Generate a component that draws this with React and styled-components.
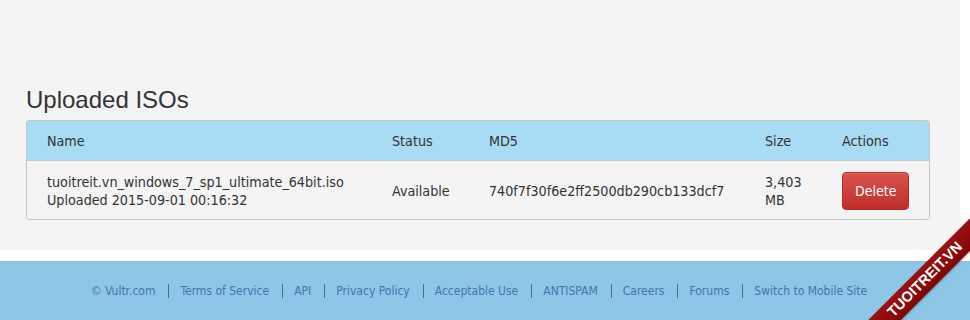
import React from 'react'
import styled, { createGlobalStyle } from 'styled-components'

const GlobalStyle = createGlobalStyle`
  html, body {
    margin: 0;
    padding: 0;
    background: #ffffff;
  }
  body {
    font-family: "DejaVu Sans Condensed", "DejaVu Sans", sans-serif;
    color: #333333;
  }
`

const Page = styled.div`
  position: relative;
  width: 970px;
  height: 320px;
  overflow: hidden;
  background: #ffffff;
`

const Main = styled.section`
  box-sizing: border-box;
  width: 960px;
  height: 250px;
  padding: 86px 0 0 26px;
  background: #f4f4f4;
`

const Heading = styled.h2`
  margin: 0 0 6px 0;
  font-family: "Liberation Sans", Arial, sans-serif;
  font-size: 24px;
  font-weight: 400;
  line-height: 28px;
  color: #333333;
`

const Table = styled.div`
  width: 904px;
  box-sizing: border-box;
  border: 1px solid #c3c7ca;
  border-radius: 3px;
  overflow: hidden;
  font-size: 14.2px;
`

const Row = styled.div`
  display: grid;
  grid-template-columns: 345px 97px 276px 77px 1fr;
  align-items: center;
  min-height: ${(p) => (p.head ? '40px' : '58px')};
  padding-top: ${(p) => (p.head ? '0' : '1px')};
  box-sizing: border-box;
  background: ${(p) => (p.head ? '#a7dcf4' : '#f4f4f4')};
  border-bottom: ${(p) => (p.head ? '1px solid #c4c9cc' : 'none')};
`

const Cell = styled.div`
  padding: 0 10px 0 20px;
  line-height: 18px;
  color: #333333;
`

const SizeCell = styled(Cell)`
  padding-right: 0;
  width: 40px;
`

const DeleteButton = styled.button`
  height: 38px;
  padding: 0 12px;
  font-family: "DejaVu Sans Condensed", "DejaVu Sans", sans-serif;
  font-size: 14px;
  color: #ffffff;
  background: linear-gradient(to bottom, #d9534f 0%, #c12e2a 100%);
  border: 1px solid #b92c28;
  border-radius: 4px;
  box-shadow: inset 0 1px 0 rgba(255, 255, 255, 0.15);
  cursor: pointer;
`

const Footer = styled.footer`
  margin-top: 11px;
  height: 59px;
  box-sizing: border-box;
  padding-right: 10px;
  background: #8dc6e6;
  display: flex;
  align-items: center;
  justify-content: center;
`

const FooterLink = styled.a`
  font-size: 12px;
  line-height: 14px;
  color: #4576a8;
  text-decoration: none;
  padding: 0 13px 0 11px;
  border-left: ${(p) => (p.first ? 'none' : '1px solid #3c6fa3')};
`

const Ribbon = styled.div`
  position: absolute;
  left: 835px;
  top: 268px;
  width: 180px;
  height: 23px;
  transform: rotate(-45deg);
  background: linear-gradient(to bottom, #9a1010, #7e0707);
  color: #ffffff;
  font-family: "Liberation Sans", Arial, sans-serif;
  font-weight: 700;
  font-size: 14.5px;
  line-height: 23px;
  text-align: center;
  box-shadow: 0 1px 2px rgba(0, 0, 0, 0.3);
`

const links = [
  '© Vultr.com',
  'Terms of Service',
  'API',
  'Privacy Policy',
  'Acceptable Use',
  'ANTISPAM',
  'Careers',
  'Forums',
  'Switch to Mobile Site',
]

const isos = [
  {
    name: 'tuoitreit.vn_windows_7_sp1_ultimate_64bit.iso',
    uploaded: '2015-09-01 00:16:32',
    status: 'Available',
    md5: '740f7f30f6e2ff2500db290cb133dcf7',
    size: '3,403 MB',
  },
]

const App = () => {
  return (
    <Page>
      <GlobalStyle />
      <Main>
        <Heading>Uploaded ISOs</Heading>
        <Table>
          <Row head>
            <Cell>Name</Cell>
            <Cell>Status</Cell>
            <Cell>MD5</Cell>
            <Cell>Size</Cell>
            <Cell>Actions</Cell>
          </Row>
          {isos.map((iso) => (
            <Row key={iso.md5}>
              <Cell>
                {iso.name}
                <br />
                Uploaded {iso.uploaded}
              </Cell>
              <Cell>{iso.status}</Cell>
              <Cell>{iso.md5}</Cell>
              <SizeCell>{iso.size}</SizeCell>
              <Cell>
                <DeleteButton>Delete</DeleteButton>
              </Cell>
            </Row>
          ))}
        </Table>
      </Main>
      <Footer>
        {links.map((l, i) => (
          <FooterLink key={l} href="#" first={i === 0}>
            {l}
          </FooterLink>
        ))}
      </Footer>
      <Ribbon>TUOITREIT.VN</Ribbon>
    </Page>
  )
}

export default App
